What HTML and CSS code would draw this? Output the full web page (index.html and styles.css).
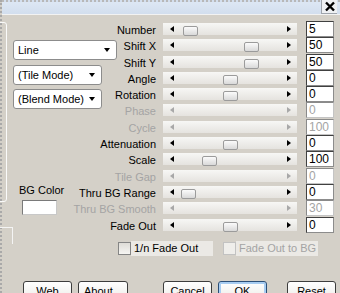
FILE: index.html
```html
<!DOCTYPE html>
<html lang="en">
<head>
  <meta charset="UTF-8" />
  <meta name="viewport" content="width=device-width, initial-scale=1" />
  <title>Tile Settings</title>
  <link rel="stylesheet" href="styles.css">
</head>
<body>
  <div class="window">
    <div class="titlebar">
      <div class="close">
        <svg width="12" height="11" viewBox="0 0 12 11">
          <path d="M2 1.5 L10 9.5 M10 1.5 L2 9.5" stroke="#000" stroke-width="2.4" fill="none"/>
        </svg>
      </div>
    </div>
    <div class="edge-top"></div>
    <div class="edge-bottom"></div>

    <div class="content">
      <div class="side">
        <div class="select wide">Line</div>
        <div class="select">(Tile Mode)</div>
        <div class="select">(Blend Mode)</div>
        <div class="bgcolor">
          <div class="bg-label">BG Color</div>
          <div class="swatch"></div>
        </div>
      </div>

      <div class="params">
        <div class="label">Number</div>
        <div class="slider"><span class="thumb" style="left: 20px"></span></div>
        <div class="value">5</div>

        <div class="label">Shift X</div>
        <div class="slider"><span class="thumb" style="left: 81px"></span></div>
        <div class="value">50</div>

        <div class="label">Shift Y</div>
        <div class="slider"><span class="thumb" style="left: 81px"></span></div>
        <div class="value">50</div>

        <div class="label">Angle</div>
        <div class="slider"><span class="thumb" style="left: 60px"></span></div>
        <div class="value">0</div>

        <div class="label">Rotation</div>
        <div class="slider"><span class="thumb" style="left: 60px"></span></div>
        <div class="value">0</div>

        <div class="label off">Phase</div>
        <div class="slider off"></div>
        <div class="value off">0</div>

        <div class="label off">Cycle</div>
        <div class="slider off"></div>
        <div class="value off">100</div>

        <div class="label">Attenuation</div>
        <div class="slider"><span class="thumb" style="left: 60px"></span></div>
        <div class="value">0</div>

        <div class="label">Scale</div>
        <div class="slider"><span class="thumb" style="left: 39px"></span></div>
        <div class="value">100</div>

        <div class="label off">Tile Gap</div>
        <div class="slider off"></div>
        <div class="value off">0</div>

        <div class="label">Thru BG Range</div>
        <div class="slider"><span class="thumb" style="left: 18px"></span></div>
        <div class="value">0</div>

        <div class="label off">Thru BG Smooth</div>
        <div class="slider off"></div>
        <div class="value off">30</div>

        <div class="label">Fade Out</div>
        <div class="slider"><span class="thumb" style="left: 60px"></span></div>
        <div class="value">0</div>
      </div>
    </div>

    <div class="checks">
      <div class="check">
        <span class="box"></span>
        <span class="check-text">1/n Fade Out</span>
      </div>
      <div class="check off">
        <span class="box"></span>
        <span class="check-text">Fade Out to BG</span>
      </div>
    </div>

    <div class="buttons">
      <div class="btn">Web</div>
      <div class="btn about">About...</div>
      <div class="btn cancel">Cancel</div>
      <div class="btn ok">OK</div>
      <div class="btn reset">Reset</div>
    </div>
  </div>
</body>
</html>
```

FILE: styles.css
```css
body {
  margin: 0;
  width: 340px;
  height: 293px;
  overflow: hidden;
  background-color: #d4d0c8;
  color: #000;
  font-family: 'Liberation Sans', Arial, sans-serif;
  font-size: 11px;
}

.window {
  position: relative;
  height: 100%;
  box-sizing: border-box;
  border-left: 2px dotted #a9a9a9;
}

.titlebar {
  height: 12px;
  border-top: 2px dotted #b8b8b8;
  border-bottom: 1px solid #f2f2f2;
  background: linear-gradient(#dde7f4, #d2deee);
  display: flex;
  justify-content: flex-end;
}

.close {
  width: 15px;
  height: 13px;
  margin-top: -2px;
  margin-right: 3px;
  background: #eef0f3;
  border-left: 1px solid #9ea4ac;
  border-bottom: 1px solid #9ea4ac;
  display: flex;
  align-items: center;
  justify-content: center;
}

/* edges of the panel behind */
.edge-top {
  position: absolute;
  left: -12px;
  top: 22px;
  width: 15px;
  height: 178px;
  border: 1px solid #fafafa;
  border-radius: 3px;
}

.edge-bottom {
  position: absolute;
  left: -4px;
  top: 227px;
  width: 14px;
  height: 16px;
  border-top: 1px solid #f4f4f4;
  border-right: 1px solid #f4f4f4;
}

.content {
  display: flex;
  padding-top: 6px;
}

.side {
  flex: none;
  width: 62px;
  box-sizing: border-box;
  padding-left: 11px;
  display: flex;
  flex-direction: column;
}

.select {
  flex: none;
  width: 89px;
  height: 20px;
  box-sizing: border-box;
  margin-top: 5px;
  padding: 0 6px 0 4px;
  background: #fff;
  border: 1px solid #8c8c8c;
  border-radius: 3px;
  display: flex;
  align-items: center;
  justify-content: space-between;
  white-space: nowrap;
}

.select::after {
  content: '';
  border-left: 3.5px solid transparent;
  border-right: 3.5px solid transparent;
  border-top: 4px solid #000;
}

.select.wide {
  width: 104px;
  margin-top: 19px;
}

.select:nth-child(3) {
  margin-top: 4px;
}

.bgcolor {
  margin-top: 75px;
  margin-left: 6px;
}

.bg-label {
  line-height: 13px;
  white-space: nowrap;
}

.swatch {
  width: 35px;
  height: 15px;
  box-sizing: border-box;
  margin: 3px 0 0 3px;
  background: #fff;
  border: 1px solid;
  border-color: #7a7a7a #c8c8c8 #c8c8c8 #7a7a7a;
}

.params {
  display: grid;
  grid-template-columns: 92px 134px 30px;
  grid-auto-rows: 16.3px;
  column-gap: 7px;
}

.label {
  text-align: right;
  line-height: 18px;
  white-space: nowrap;
}

.label.off {
  color: #a4a4a4;
}

.slider {
  position: relative;
  height: 12px;
  margin-top: 2px;
  box-sizing: border-box;
  padding: 0 6px 0 7px;
  background: linear-gradient(#f7f7f5, #e5e3df);
  display: flex;
  align-items: center;
  justify-content: space-between;
}

.slider::before {
  content: '';
  border-top: 3px solid transparent;
  border-bottom: 3px solid transparent;
  border-right: 4px solid #000;
}

.slider::after {
  content: '';
  border-top: 3px solid transparent;
  border-bottom: 3px solid transparent;
  border-left: 4px solid #000;
}

.slider.off::before {
  border-right-color: #a8a8a8;
}

.slider.off::after {
  border-left-color: #a8a8a8;
}

.thumb {
  position: absolute;
  top: 3px;
  width: 13px;
  height: 8px;
  border: 1px solid #9b9b9b;
  border-radius: 2px;
  background: linear-gradient(#fbfbfb, #d9d9d9);
}

.value {
  justify-self: end;
  width: 28px;
  height: 16px;
  box-sizing: border-box;
  padding-left: 2px;
  line-height: 14px;
  font-size: 12px;
  background: #fff;
  border: 1px solid;
  border-color: #404040 #8c8c8c #8c8c8c #404040;
}

.value.off {
  color: #a4a4a4;
  border-color: #8a8a8a #c4c4c4 #c4c4c4 #8a8a8a;
}

.checks {
  display: flex;
  gap: 10px;
  margin-top: 8px;
  padding-left: 116px;
}

.check {
  display: flex;
  align-items: center;
  height: 15px;
}

.box {
  width: 13px;
  height: 13px;
  box-sizing: border-box;
  border: 1px solid #858585;
  background: linear-gradient(#dedcd7, #f6f5f2);
}

.check-text {
  width: 82px;
  height: 15px;
  box-sizing: border-box;
  padding-left: 3px;
  line-height: 15px;
  background: #ebe9e5;
}

.check.off .box {
  border-color: #c2c2c2;
  background: #efeeeb;
}

.check.off .check-text {
  color: #a4a4a4;
}

.buttons {
  display: flex;
  margin-top: 25px;
  padding-left: 21px;
}

.btn {
  width: 49px;
  height: 23px;
  box-sizing: border-box;
  border: 1px solid #3d3d3d;
  border-radius: 3px;
  background: linear-gradient(#ffffff, #e9e8e3);
  text-align: center;
  line-height: 19px;
}

.about { width: 50px; margin-left: 6px; }
.cancel { margin-left: 35px; }
.ok {
  margin-left: 6px;
  border-color: #2b4f78;
  box-shadow: inset 0 0 0 2px #a8cdf2;
}
.reset { margin-left: 20px; }
```
